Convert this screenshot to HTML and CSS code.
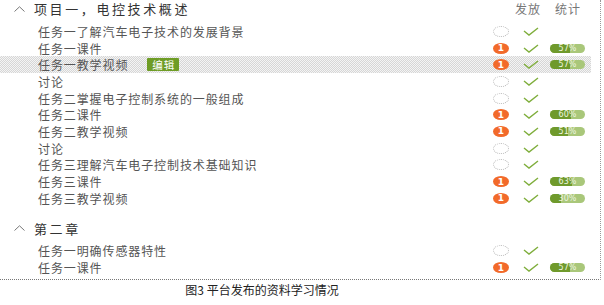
FILE: index.html
```html
<!DOCTYPE html>
<html lang="zh">
<head>
    <meta charset="UTF-8">
    <title>资料学习情况</title>
    <link rel="stylesheet" href="styles.css">
</head>
<body>
    <div class="panel">
        <div class="chapter">
            <span class="caret"><svg width="11" height="6" viewBox="0 0 11 6"><polyline points="0.5,5.5 5.5,0.8 10.5,5.5" /></svg></span>
            <span class="chapter-title">项目一，电控技术概述</span>
            <span class="col-head head-send">发放</span>
            <span class="col-head head-stat">统计</span>
        </div>
        <div class="rows">
            <div class="row"><span class="name">任务一了解汽车电子技术的发展背景</span><span class="dot empty"></span><span class="check"><svg width="16" height="9" viewBox="0 0 16 9"><polyline points="1,4 6,8 15,1" /></svg></span><span class="stat"></span></div>
            <div class="row"><span class="name">任务一课件</span><span class="dot num">1</span><span class="check"><svg width="16" height="9" viewBox="0 0 16 9"><polyline points="1,4 6,8 15,1" /></svg></span><span class="stat"><span class="pill"><span class="fill" style="width:57%"></span><span class="pct">57%</span></span></span></div>
            <div class="row active"><span class="name">任务一教学视频<span class="tag">编辑</span></span><span class="dot num">1</span><span class="check"><svg width="16" height="9" viewBox="0 0 16 9"><polyline points="1,4 6,8 15,1" /></svg></span><span class="stat"><span class="pill"><span class="fill" style="width:57%"></span><span class="pct">57%</span></span></span></div>
            <div class="row"><span class="name">讨论</span><span class="dot empty"></span><span class="check"><svg width="16" height="9" viewBox="0 0 16 9"><polyline points="1,4 6,8 15,1" /></svg></span><span class="stat"></span></div>
            <div class="row"><span class="name">任务二掌握电子控制系统的一般组成</span><span class="dot empty"></span><span class="check"><svg width="16" height="9" viewBox="0 0 16 9"><polyline points="1,4 6,8 15,1" /></svg></span><span class="stat"></span></div>
            <div class="row"><span class="name">任务二课件</span><span class="dot num">1</span><span class="check"><svg width="16" height="9" viewBox="0 0 16 9"><polyline points="1,4 6,8 15,1" /></svg></span><span class="stat"><span class="pill"><span class="fill" style="width:60%"></span><span class="pct">60%</span></span></span></div>
            <div class="row"><span class="name">任务二教学视频</span><span class="dot num">1</span><span class="check"><svg width="16" height="9" viewBox="0 0 16 9"><polyline points="1,4 6,8 15,1" /></svg></span><span class="stat"><span class="pill"><span class="fill" style="width:51%"></span><span class="pct">51%</span></span></span></div>
            <div class="row"><span class="name">讨论</span><span class="dot empty"></span><span class="check"><svg width="16" height="9" viewBox="0 0 16 9"><polyline points="1,4 6,8 15,1" /></svg></span><span class="stat"></span></div>
            <div class="row"><span class="name">任务三理解汽车电子控制技术基础知识</span><span class="dot empty"></span><span class="check"><svg width="16" height="9" viewBox="0 0 16 9"><polyline points="1,4 6,8 15,1" /></svg></span><span class="stat"></span></div>
            <div class="row"><span class="name">任务三课件</span><span class="dot num">1</span><span class="check"><svg width="16" height="9" viewBox="0 0 16 9"><polyline points="1,4 6,8 15,1" /></svg></span><span class="stat"><span class="pill"><span class="fill" style="width:63%"></span><span class="pct">63%</span></span></span></div>
            <div class="row"><span class="name">任务三教学视频</span><span class="dot num">1</span><span class="check"><svg width="16" height="9" viewBox="0 0 16 9"><polyline points="1,4 6,8 15,1" /></svg></span><span class="stat"><span class="pill"><span class="fill" style="width:30%"></span><span class="pct">30%</span></span></span></div>
        </div>

        <div class="chapter second">
            <span class="caret"><svg width="11" height="6" viewBox="0 0 11 6"><polyline points="0.5,5.5 5.5,0.8 10.5,5.5" /></svg></span>
            <span class="chapter-title">第二章</span>
        </div>
        <div class="rows">
            <div class="row"><span class="name">任务一明确传感器特性</span><span class="dot empty"></span><span class="check"><svg width="16" height="9" viewBox="0 0 16 9"><polyline points="1,4 6,8 15,1" /></svg></span><span class="stat"></span></div>
            <div class="row"><span class="name">任务一课件</span><span class="dot num">1</span><span class="check"><svg width="16" height="9" viewBox="0 0 16 9"><polyline points="1,4 6,8 15,1" /></svg></span><span class="stat"><span class="pill"><span class="fill" style="width:57%"></span><span class="pct">57%</span></span></span></div>
        </div>
    </div>
    <div class="caption">图3 平台发布的资料学习情况</div>
</body>
</html>
```

FILE: styles.css
```css
body {
    margin: 0;
    font-family: "Noto Sans CJK SC", "DejaVu Sans", sans-serif;
    background-color: #fff;
    color: #555;
}

.panel {
    width: 601px;
    height: 280px;
    border-right: 1px dotted #999;
    border-bottom: 1px dotted #777;
    box-sizing: border-box;
}

.chapter {
    display: flex;
    align-items: center;
    height: 17px;
    position: relative;
    font-size: 13px;
    color: #333;
}

.chapter.second {
    margin-top: 13px;
}

.caret {
    width: 34px;
    padding-left: 14px;
    box-sizing: border-box;
    display: flex;
    align-items: center;
}

.caret polyline {
    fill: none;
    stroke: #777;
    stroke-width: 1;
}

.chapter-title {
    flex: 1;
    letter-spacing: 2.6px;
    white-space: nowrap;
}

.col-head {
    position: absolute;
    top: 0;
    font-size: 12px;
    letter-spacing: 1px;
    color: #777;
}

.head-send {
    left: 515px;
}

.head-stat {
    left: 555px;
}

.rows {
    margin-top: 6px;
}

.row {
    display: flex;
    align-items: center;
    height: 16.7px;
    width: 591px;
    font-size: 12px;
}

.row.active {
    background-color: #e6e6e6;
    background-image: repeating-conic-gradient(#d6d6d6 0 25%, #f4f4f4 0 50%);
    background-size: 2px 2px;
}

.name {
    flex: 1;
    padding-left: 38px;
    display: flex;
    align-items: center;
    white-space: nowrap;
    letter-spacing: 0.9px;
}

.tag {
    margin-left: 19px;
    background-color: #6e9c25;
    color: #fff;
    font-size: 10.5px;
    line-height: 13px;
    letter-spacing: 1px;
    padding: 0 4px 0 5px;
    border-radius: 1px;
}

.dot {
    width: 16px;
    height: 11px;
    border-radius: 50%;
    box-sizing: border-box;
    margin-right: 14px;
    display: flex;
    align-items: center;
    justify-content: center;
}

.dot.empty {
    border: 1px dotted #bbb;
}

.dot.num {
    background-color: #f26a2a;
    color: #fff;
    font-size: 9px;
    font-weight: bold;
    font-family: "DejaVu Sans", sans-serif;
}

.check {
    width: 27px;
    display: flex;
    align-items: center;
}

.check polyline {
    fill: none;
    stroke: #7fae3c;
    stroke-width: 1.4;
}

.stat {
    width: 41px;
    display: flex;
    align-items: center;
}

.pill {
    position: relative;
    width: 35px;
    height: 9px;
    border-radius: 5px;
    background-color: #a9c77a;
    overflow: hidden;
    display: flex;
    align-items: center;
    justify-content: center;
}

.fill {
    position: absolute;
    left: 0;
    top: 0;
    bottom: 0;
    background-color: #6f9a2c;
}

.pct {
    position: relative;
    color: #eef5e0;
    font-size: 8px;
    font-family: "DejaVu Sans", sans-serif;
    line-height: 9px;
}

.caption {
    text-align: center;
    font-size: 12px;
    color: #222;
    padding-right: 80px;
    margin-top: 1px;
}
```
